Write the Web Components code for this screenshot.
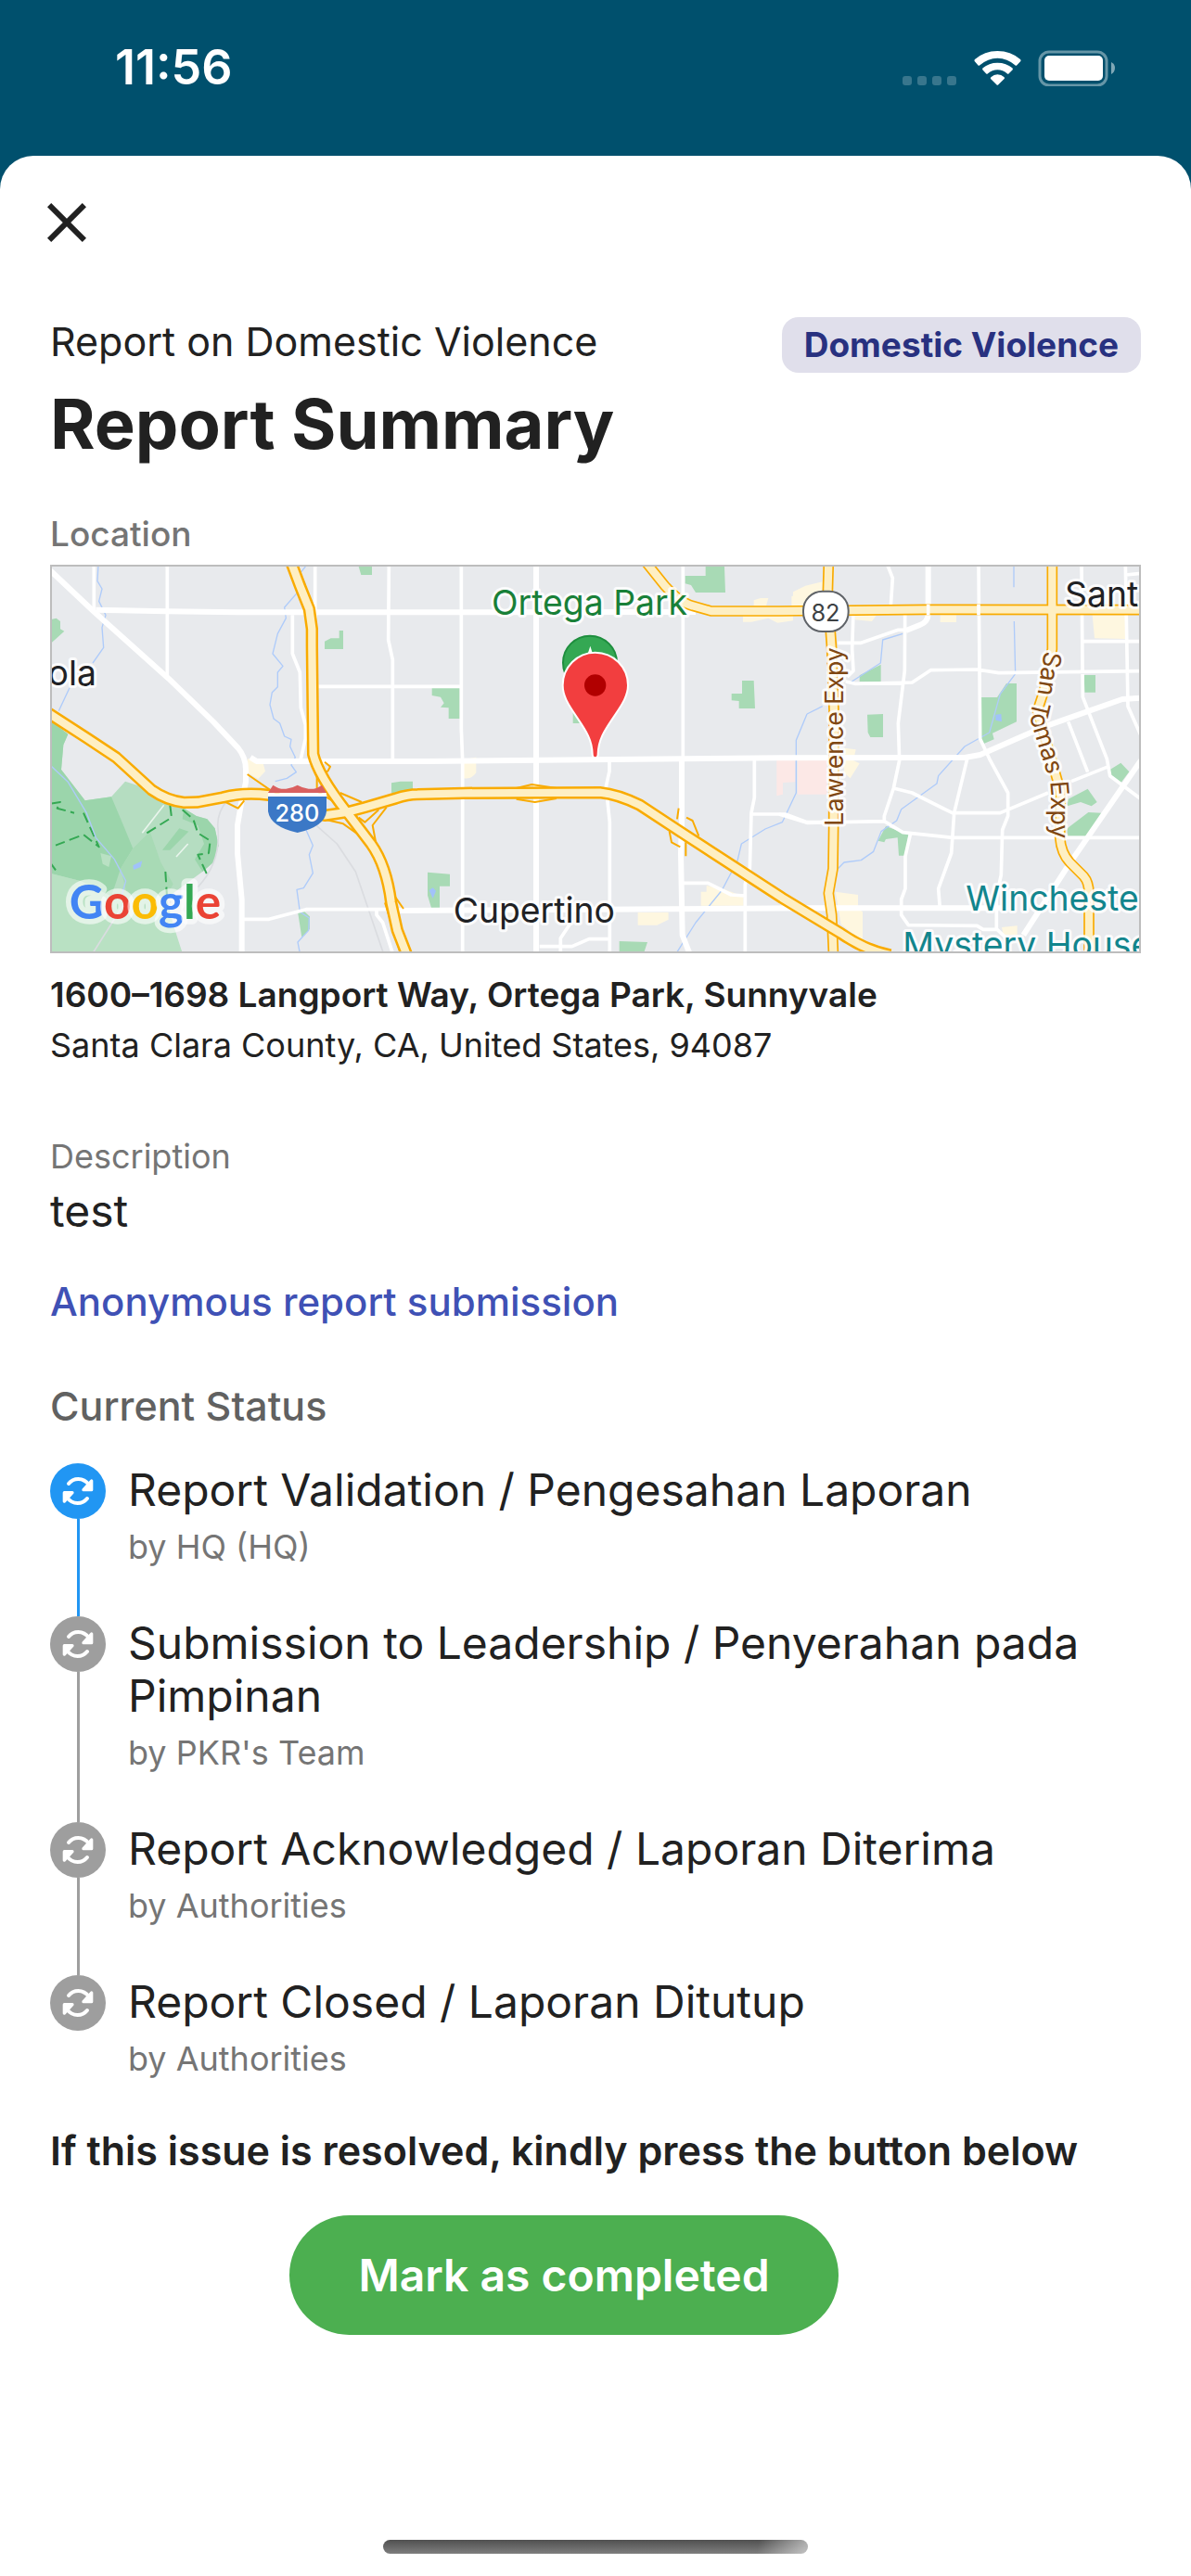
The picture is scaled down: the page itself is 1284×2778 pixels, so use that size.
<!DOCTYPE html>
<html lang="en">
<head>
<meta charset="utf-8">
<meta name="viewport" content="width=device-width, initial-scale=1">
<title>Report Summary</title>
<style>
  body {
    margin: 0;
    min-height: 100vh;
    display: flex;
    flex-direction: column;
    background: #00506d;
    color: #212121;
    font-family: Inter, "Liberation Sans", sans-serif;
  }
</style>
</head>
<body>
<status-bar time="11:56"></status-bar>
<report-sheet>
  <report-header>
    <span slot="subtitle">Report on Domestic Violence</span>
    <span slot="title">Report Summary</span>
    <tag-chip slot="tag">Domestic Violence</tag-chip>
  </report-header>
  <report-location>
    <span slot="street">1600–1698 Langport Way, Ortega Park, Sunnyvale</span>
    <span slot="region">Santa Clara County, CA, United States, 94087</span>
  </report-location>
  <report-description>test</report-description>
  <status-timeline>
    <timeline-step active by="HQ (HQ)">Report Validation / Pengesahan Laporan</timeline-step>
    <timeline-step by="PKR's Team">Submission to Leadership / Penyerahan pada Pimpinan</timeline-step>
    <timeline-step by="Authorities">Report Acknowledged / Laporan Diterima</timeline-step>
    <timeline-step by="Authorities" last>Report Closed / Laporan Ditutup</timeline-step>
  </status-timeline>
  <resolve-action>
    If this issue is resolved, kindly press the button below
    <span slot="action">Mark as completed</span>
  </resolve-action>
</report-sheet>

<script>
class StatusBar extends HTMLElement {
  constructor() {
    super();
    this._shadowRoot = this.attachShadow({ mode: 'open' });
  }

  connectedCallback() {
    this._shadowRoot.innerHTML = `
    <style>
    :host {
      display: flex;
      align-items: center;
      justify-content: space-between;
      box-sizing: border-box;
      height: 168px;
      padding: 0 82px 22px 124px;
      color: white;
    }

    time {
      font-size: 52px;
      font-weight: 600;
      line-height: 60px;
    }

    .icons {
      display: flex;
      align-items: center;
      gap: 18px;
    }

    svg {
      display: block;
    }
    </style>

    <time>${this.getAttribute('time')}</time>
    <div class="icons">
      <svg width="60" height="39" fill="#fff" fill-opacity=".22">
        <rect x="1" y="28" width="10" height="10" rx="3"/>
        <rect x="17" y="28" width="10" height="10" rx="3"/>
        <rect x="33" y="28" width="10" height="10" rx="3"/>
        <rect x="49" y="28" width="10" height="10" rx="3"/>
      </svg>
      <svg width="51" height="39" viewBox="0 0 153 117" fill="#fff">
        <path d="M2 36 Q0 33 3 30 Q34 3 76 3 Q119 3 150 30 Q153 33 151 36 L139 49 Q136 52 133 49 Q108 26 76 26 Q45 26 19 49 Q16 52 13 49 Z"/>
        <path d="M28 64 Q26 61 29 58 Q48 41 76 41 Q105 41 124 58 Q127 61 125 64 L113 76 Q110 79 107 76 Q94 64 76 64 Q59 64 45 76 Q42 79 39 76 Z"/>
        <path d="M54 93 Q52 90 56 87 Q64 79 76 79 Q89 79 97 87 Q101 90 98 93 L79 112 Q76 115 73 112 Z"/>
      </svg>
      <svg width="83" height="39" viewBox="0 0 83 39">
        <rect x="2" y="2" width="72" height="36" rx="10" fill="none" stroke="#fff" stroke-opacity=".4" stroke-width="3"/>
        <rect x="7" y="6" width="63" height="27" rx="5" fill="#fff"/>
        <path d="M79 13 Q83 15 83 19 Q83 24 79 26 Z" fill="#fff" fill-opacity=".5"/>
      </svg>
    </div>
    `;
  }
}

class ReportSheet extends HTMLElement {
  constructor() {
    super();
    this._shadowRoot = this.attachShadow({ mode: 'open' });
  }

  connectedCallback() {
    this._shadowRoot.innerHTML = `
    <style>
    :host {
      flex: 1;
      display: flex;
      flex-direction: column;
      box-sizing: border-box;
      padding: 36px 54px 24px;
      border-radius: 36px 36px 0 0;
      background: white;
    }

    .close {
      align-self: flex-start;
      margin: 0 0 66px -18px;
      padding: 0;
      border: none;
      background: none;
      color: inherit;
      cursor: pointer;
    }

    .close svg {
      display: block;
    }

    main {
      flex: 1;
    }

    .home {
      align-self: center;
      width: 458px;
      height: 15px;
      border-radius: 8px;
      background:
        linear-gradient(100deg, transparent 88%, rgba(255, 255, 255, .5) 99%),
        linear-gradient(#505050, #7e7e7e);
    }
    </style>

    <button class="close" type="button" aria-label="Close">
      <svg width="72" height="72" viewBox="0 0 24 24" fill="currentColor">
        <path d="M19 6.41 17.59 5 12 10.59 6.41 5 5 6.41 10.59 12 5 17.59 6.41 19 12 13.41 17.59 19 19 17.59 13.41 12z"/>
      </svg>
    </button>
    <main><slot></slot></main>
    <div class="home"></div>
    `;
  }
}

class ReportHeader extends HTMLElement {
  constructor() {
    super();
    this._shadowRoot = this.attachShadow({ mode: 'open' });
  }

  connectedCallback() {
    this._shadowRoot.innerHTML = `
    <style>
    :host {
      display: flex;
      align-items: flex-start;
      justify-content: space-between;
      gap: 24px;
      margin-bottom: 56px;
    }

    p {
      margin: 0 0 21px;
      font-size: 43px;
      line-height: 52px;
    }

    h1 {
      margin: 0;
      font-size: 74px;
      font-weight: 700;
      line-height: 84px;
    }
    </style>

    <div>
      <p><slot name="subtitle"></slot></p>
      <h1><slot name="title"></slot></h1>
    </div>
    <slot name="tag"></slot>
    `;
  }
}

class TagChip extends HTMLElement {
  constructor() {
    super();
    this._shadowRoot = this.attachShadow({ mode: 'open' });
  }

  connectedCallback() {
    this._shadowRoot.innerHTML = `
    <style>
    :host {
      display: block;
      padding: 12px 24px;
      border-radius: 18px;
      background: #e0dfeb;
      color: #283180;
      font-size: 37px;
      font-weight: 700;
      line-height: 36px;
      white-space: nowrap;
    }
    </style>

    <slot></slot>
    `;
  }
}

class ReportLocation extends HTMLElement {
  constructor() {
    super();
    this._shadowRoot = this.attachShadow({ mode: 'open' });
  }

  connectedCallback() {
    this._shadowRoot.innerHTML = `
    <style>
    :host {
      display: block;
      margin-bottom: 78px;
      font-size: 36px;
      line-height: 42px;
    }

    h2, p {
      margin: 0;
      font-weight: 400;
    }

    h2 {
      margin-bottom: 12px;
      color: #757575;
      font-size: 37px;
      font-weight: 500;
    }

    .street {
      margin: 24px 0 12px;
      font-size: 37px;
      font-weight: 600;
    }
    </style>

    <h2>Location</h2>
    <map-preview></map-preview>
    <p class="street"><slot name="street"></slot></p>
    <p><slot name="region"></slot></p>
    `;
  }
}

class MapPreview extends HTMLElement {
  constructor() {
    super();
    this._shadowRoot = this.attachShadow({ mode: 'open' });
  }

  connectedCallback() {
    this._shadowRoot.innerHTML = `
    <style>
    :host {
      display: block;
      outline: 2px solid #bdbdbd;
      outline-offset: -2px;
    }

    svg {
      display: block;
      width: 100%;
      height: auto;
      background: #e8eaed;
    }

    path {
      stroke-linejoin: round;
    }

    .road, .water, .trail, .rail { fill: none; }
    .road { stroke: #fff; stroke-width: 11; }
    .wide { stroke-width: 18; }
    .water { stroke: #aecbfa; stroke-width: 4; }
    .trail { stroke: #34a853; stroke-width: 6; stroke-dasharray: 34 16; }
    .rail { stroke: #dadce0; stroke-width: 5; }
    .park { fill: #a8dab5; }
    .shop { fill: #fef7e0; }
    .care { fill: #fce8e6; }
    .casing { fill: none; stroke: #f9ab00; stroke-width: 40; }
    .fill { fill: none; stroke: #feefc3; stroke-width: 25; }
    .casing.expy { stroke-width: 35; }
    .ramp { fill: none; stroke: #f9ab00; stroke-width: 6; }

    text {
      font-size: 112px;
      fill: #202124;
      stroke: #fff;
      stroke-opacity: .85;
      stroke-width: 18;
      stroke-linejoin: round;
      paint-order: stroke;
    }

    .expy-name { font-size: 80px; fill: #7f4712; }
    .green { fill: #188038; }
    .teal { fill: #12858d; }
    .shield { font-size: 76px; fill: #fff; stroke: none; font-weight: 500; }
    .logo {
      font-family: Lato, sans-serif;
      font-size: 154px;
      font-weight: 700;
      stroke-width: 34;
      stroke-opacity: .6;
    }
    </style>

    <svg viewBox="42 27 3528 1257" role="img" aria-label="Map of Ortega Park, Sunnyvale">
      <!-- open space reserve -->
      <path class="park" fill-opacity=".8" d="M42 530 L100 575 L85 610 L78 690 L155 790 L240 778 L285 728 L370 755 L475 815 L515 840 L550 850 L575 880 L587 935 L570 990 L535 1020 L440 1090 L418 1100 L430 1190 L470 1284 H42 Z"/>
      <path fill="#9bd5ab" d="M42 530 L100 575 L85 610 L78 690 L155 790 L240 778 L275 860 L310 945 L270 1010 L240 1100 L140 1050 L42 1025 Z"/>
      <path fill="#a8dab5" d="M310 945 L365 890 L400 990 L440 1060 L418 1100 L290 1090 L270 1010 Z"/>
      <path fill="#9bd5ab" d="M475 815 L515 840 L550 850 L575 880 L587 935 L570 990 L535 1020 L510 980 L540 930 L520 870 L470 850 Z M405 950 L460 880 L490 890 L430 950 Z"/>
      <path fill="#b9e1c3" d="M42 1025 L140 1050 L240 1100 L418 1100 L440 1190 L470 1284 H42 Z M205 960 L240 970 L232 1005 L212 995 Z"/>
      <path class="trail" d="M42 800 L75 795 L65 815 L120 830 M150 830 L200 940 L150 900 L60 935 M355 895 L435 845 L430 805 M470 820 L505 850 L520 895 L560 920 L555 960 L520 965 L550 1030 M415 1020 L420 1100 M42 990 L60 1015"/>
      <path fill="#a1c2fa" d="M310 1000 L340 985 L335 1005 L312 1014 Z"/>
      <path class="rail" d="M615 790 Q580 830 585 880 Q595 990 520 1070 M180 1284 L290 1110 M880 850 L970 930 L1030 1020 L1120 1284"/>
      <path class="road" d="M340 895 L410 805 M450 972 L488 930" style="stroke-width:5;stroke-opacity:.7"/>

      <!-- parks, shops, hospital -->
      <path class="park" d="M42 205 L62 200 L75 210 V235 L88 242 L48 278 H42 Z M1040 33 H1083 V60 H1048 Z M977 240 H990 V300 H930 V275 L950 265 H977 Z M1146 733 L1175 728 H1215 V765 H1146 Z M843 1150 H865 L882 1165 V1205 L856 1232 Z"/>
      <path class="shop" d="M680 655 L728 658 L738 695 L715 720 L680 700 Z"/>
      <g transform="translate(1230)">
        <path class="park" d="M932 33 H993 L996 117 H900 L885 93 L866 88 V63 H932 Z M47 426 H137 V525 H101 V490 L75 488 L86 475 L75 455 L47 450 Z M1050 402 H1088 L1092 492 H1040 V468 L1016 466 V444 H1050 Z M503 500 H540 V540 H503 Z M33 1022 L105 1028 V1067 H72 V1137 H45 L33 1097 Z M653 1245 L744 1248 L732 1284 H653 Z"/>
        <path class="shop" d="M150 658 L190 650 V700 Q175 722 150 718 Z M917 1085 H935 V1065 L1000 1080 L1055 1100 V1130 H917 Z M713 1152 H812 V1175 L775 1193 H713 Z M1088 160 V142 L1110 135 H1135 L1128 160 Z M1210 160 V130 L1250 112 L1300 110 V160 Z M1053 192 H1215 V208 L1165 215 L1135 200 L1080 212 H1053 Z"/>
        <path class="care" d="M1162 660 H1222 V730 L1182 732 V770 L1162 775 Z M1230 660 H1325 V770 H1230 Z"/>
        <path fill="#a1c2fa" d="M38 1080 L50 1072 L60 1082 L50 1107 Z"/>
      </g>
      <g transform="translate(2400)">
        <path class="park" d="M260 385 L329 350 V405 H260 Z M285 512 L336 510 V585 H295 L287 570 Z M651 456 H705 L735 411 H768 V535 L690 572 L695 592 L662 606 L651 590 Z M986 384 H1023 V440 H988 Z M1070 690 L1105 668 L1132 697 L1105 733 L1070 705 Z M935 785 L998 752 L1028 795 L1010 808 L975 795 L932 808 Z M932 880 L1000 828 L1042 830 L995 905 H932 Z M320 920 L345 873 L418 900 L408 968 H387 L383 910 L345 915 L340 925 Z"/>
        <path class="shop" d="M45 160 V115 L85 95 L140 82 V160 Z M245 190 H315 L300 210 L245 205 Z M521 190 H573 V213 H521 Z M1013 190 H1120 V267 L1020 265 Z M210 620 L248 625 L240 660 L260 670 L230 718 L210 700 Z M182 1085 L255 1095 V1140 L270 1150 V1245 L200 1190 Z M720 1200 L770 1195 V1225 H725 Z"/>
        <path fill="#a1c2fa" d="M700 512 L718 510 L720 535 L700 530 Z"/>
      </g>

      <!-- creeks -->
      <path class="water" d="M198 27 L195 80 L210 105 L200 145 L222 190 L210 230 L215 295 L180 345 M105 425 L70 500 M42 675 L100 730 L160 830 L190 910 L250 980 L287 1050 L270 1110 M868 33 L850 55 L868 90 L835 125 L800 165 L805 200 L778 250 L762 315 L795 355 L778 375 V422 L760 440 L753 480 L765 525 L785 540 L800 582 L822 592 L818 615 L835 650 L822 675 L838 698 L808 718 L770 728 M870 885 L892 935 L880 965 L892 1025 L862 1073 L840 1078 L850 1150 L880 1170 L878 1210 L843 1248 L850 1284"/>
      <path class="water" d="M2490 510 L2455 595 V765 L2410 860 L2355 882 L2278 930 L2265 985 L2215 1080 L2130 1185 L2070 1280"/>
      <path class="water" d="M2800 250 L2735 270 L2728 345 L2630 408 M2540 485 L2490 510 M3159 33 V100 M3160 210 L3164 380 L3115 445 L3080 570 L3000 615 L2915 710 L2910 735 L2795 818 L2780 855 L2730 890 L2705 955 L2665 983 L2610 990 L2590 1010"/>

      <!-- streets -->
      <path class="road wide" d="M42 45 L185 180 L425 395 L570 535 L650 620 Q675 650 675 690 V730 L660 800 L648 870 V960 L662 1110 V1284"/>
      <path class="road wide" d="M190 173 L420 178 L650 181 H1000 L2130 180"/>
      <path class="road wide" d="M690 650 L710 663 H1260 L2090 655 L2400 652 L3000 651 L3050 642 L3260 550 L3510 462 L3570 458"/>
      <path class="road wide" d="M1170 1146 L1700 1143 L2490 1138 H3120"/>
      <path class="road" d="M184 27 V175 M421 27 V385 M899 27 V200 M826 190 V315 L850 375 L853 490 L868 545 V590 L853 655 M1138 27 L1136 270 L1150 335 V660 M910 421 H1370 M662 1174 H750 L870 1142 H1130 M1098 1146 V1160 L1118 1185 L1150 1284"/>
      <g transform="translate(1230)">
        <path class="road" d="M142 27 V560 L146 660 V1284 M859 27 V660 M621 660 V695 L610 745 L622 860 V1284 M395 1262 H500 L555 1238 H622 M463 1284 V1235 L500 1180 M1090 660 V780 L1080 830 L1075 1010 L1060 1060 V1284 M1075 834 H1190 L1260 860 H1340 M860 1057 H940 L1015 1095 L1060 1098"/>
        <path class="road wide" d="M384 27 V1284 M855 655 V860 L852 960 L857 1225 L880 1284"/>
      </g>
      <g transform="translate(2400)">
        <path class="road" d="M350 27 L367 70 L361 160 M407 180 L406 370 L385 540 L389 660 L370 750 L340 840 V862 M240 180 L236 300 L240 370 L220 390 M190 280 H265 L385 238 H410 M215 405 L245 412 L430 408 L490 368 L640 366 L710 377 L1170 371 M0 834 L90 862 L340 857 L400 893 L560 910 H1170 M370 750 L430 765 L560 830 H715 L870 765 M608 655 L566 830 L557 960 L515 1075 L520 1138 M645 27 L650 590 L680 655 L740 765 V840 L722 885 L718 1030 L703 1100 V1205 M424 900 L408 970 V1075 L395 1110 V1160 L418 1193 L640 1195 L660 1207 H705 L740 1240 M978 27 L982 455 L1060 655 L1070 710 L1170 785 M1120 27 L1128 485 L1170 580 M985 275 H1170 M1120 60 L1170 55 M935 535 L998 698 M945 728 L1065 680"/>
        <path class="road wide" d="M482 27 V185 Q482 212 455 222 L410 240 M790 1225 L935 1000 L1170 660"/>
      </g>

      <!-- freeways and expressways -->
      <path class="ramp" d="M680 705 L760 760 M610 795 L650 815 L670 790 M905 700 V760 L970 800 M980 765 L1050 795 M925 850 L990 865 L1060 915 M1130 812 L1085 870 L1100 950 M1125 1120 L1150 1200 L1175 1284 M1150 1090 L1185 1140 M1550 750 L1600 738 L1680 750 M1550 785 L1610 795 L1680 783 M930 665 L948 680 L940 695 L925 700 M1040 845 L1060 860 L1105 820"/>
      <path class="ramp" d="M2075 815 L2070 850 M2100 845 L2120 855 L2140 905 M2045 890 L2052 925 L2080 940 M2098 925 V970"/>
      <path class="casing expy" d="M1970 20 L2030 95 Q2080 150 2120 160 L2180 177 H2400 L2880 172 L3580 173"/>
      <path class="casing expy" d="M2560 20 L2557 120 L2570 300 L2577 500 L2576 870 L2574 1010 L2560 1090 L2570 1160 L2576 1300 M3283 20 V300 L3255 440 L3235 500 L3310 760 L3308 910 Q3312 960 3340 990 L3385 1035 Q3402 1055 3402 1090 V1300"/>
      <path class="fill" d="M2560 20 L2557 120 L2570 300 L2577 500 L2576 870 L2574 1010 L2560 1090 L2570 1160 L2576 1300 M3283 20 V300 L3255 440 L3235 500 L3310 760 L3308 910 Q3312 960 3340 990 L3385 1035 Q3402 1055 3402 1090 V1300"/>
      <path class="fill" d="M1970 20 L2030 95 Q2080 150 2120 160 L2180 177 H2400 L2880 172 L3580 173"/>
      <path class="casing" d="M30 503 L160 587 L255 650 L370 755 Q420 790 475 796 L520 795 L600 780 Q665 762 750 772 L850 820 L930 838 L1000 828 L1060 812 L1160 783 Q1200 770 1230 770 L1380 766 L1820 764 Q1880 770 1950 805 L2090 897 L2410 1105 L2600 1220 Q2680 1275 2760 1290"/>
      <path class="casing" d="M820 15 L850 95 L880 170 L889 235 V290 L893 640 Q910 710 1000 825 L1080 930 Q1130 1000 1145 1120 L1165 1210 L1200 1300"/>
      <path class="fill" d="M30 503 L160 587 L255 650 L370 755 Q420 790 475 796 L520 795 L600 780 Q665 762 750 772 L850 820 L930 838 L1000 828 L1060 812 L1160 783 Q1200 770 1230 770 L1380 766 L1820 764 Q1880 770 1950 805 L2090 897 L2410 1105 L2600 1220 Q2680 1275 2760 1290"/>
      <path class="fill" d="M820 15 L850 95 L880 170 L889 235 V290 L893 640 Q910 710 1000 825 L1080 930 Q1130 1000 1145 1120 L1165 1210 L1200 1300"/>
      <path class="road" d="M2882 155 V190 M3045 155 V190"/>

      <!-- route shields -->
      <path d="M747 765 L763 740 Q785 755 805 752 Q825 750 842 740 Q860 750 878 752 Q900 755 921 740 L936 765 Z" fill="#d96060"/>
      <path d="M747 777 H936 V825 Q930 875 842 894 Q755 875 747 825 Z" fill="#3b78c6"/>
      <path d="M747 766 H936 V777 H747 Z" fill="#fff"/>
      <text class="shield" x="841" y="857" text-anchor="middle">280</text>
      <rect x="2478" y="113" width="146" height="130" rx="62" fill="#fff" stroke="#5f6368" stroke-width="6"/>
      <text class="shield" x="2550" y="209" text-anchor="middle" style="fill:#3c4043;font-weight:400">82</text>

      <!-- place names -->
      <text x="192" y="417" text-anchor="end">ola</text>
      <text x="1346" y="1184">Cupertino</text>
      <text class="green" x="1470" y="188">Ortega Park</text>
      <text x="3324" y="161">Sant</text>
      <text class="teal" x="3004" y="1146">Wincheste</text>
      <text class="teal" x="2800" y="1296">Mystery House</text>
      <text class="expy-name" transform="translate(2608 872) rotate(-90)">Lawrence Expy</text>
      <path id="tomas" fill="none" d="M3258 305 L3236 445 Q3208 490 3216 540 L3266 700 Q3279 740 3279 760 V960"/>
      <text class="expy-name"><textPath href="#tomas">San Tomas Expy</textPath></text>
      <text class="logo" x="104" y="1174"><tspan fill="#4285f4">G</tspan><tspan fill="#ea4335">o</tspan><tspan fill="#fbbc04">o</tspan><tspan fill="#4285f4">g</tspan><tspan fill="#34a853">l</tspan><tspan fill="#ea4335">e</tspan></text>

      <!-- park badge and marker -->
      <circle cx="1788" cy="344" r="87" fill="#34a853" stroke="#1e8e3e" stroke-width="6"/>
      <path d="M1789 290 L1800 325 H1778 Z" fill="#fff"/>
      <path d="M1805 311 C1864 311 1911 358 1911 417 C1911 450 1893 478 1868 515 C1838 560 1815 590 1814 640 Q1814 652 1805 652 Q1796 652 1796 640 C1795 590 1772 560 1742 515 C1717 478 1700 450 1700 417 C1700 358 1747 311 1805 311 Z" fill="#f23e3f" stroke="#fff" stroke-width="6"/>
      <circle cx="1805" cy="417" r="35" fill="#b10000"/>
    </svg>
    `;
  }
}

class ReportDescription extends HTMLElement {
  constructor() {
    super();
    this._shadowRoot = this.attachShadow({ mode: 'open' });
  }

  connectedCallback() {
    this._shadowRoot.innerHTML = `
    <style>
    :host {
      display: block;
      margin-bottom: 60px;
    }

    h2, p {
      margin: 0;
    }

    h2 {
      margin-bottom: 12px;
      color: #757575;
      font-size: 36px;
      font-weight: 400;
      line-height: 42px;
    }

    p {
      margin-bottom: 46px;
      font-size: 48px;
      line-height: 52px;
    }

    .anonymous {
      margin: 0;
      color: #3f51b5;
      font-size: 42px;
      font-weight: 500;
    }
    </style>

    <h2>Description</h2>
    <p><slot></slot></p>
    <p class="anonymous">Anonymous report submission</p>
    `;
  }
}

class StatusTimeline extends HTMLElement {
  constructor() {
    super();
    this._shadowRoot = this.attachShadow({ mode: 'open' });
  }

  connectedCallback() {
    this._shadowRoot.innerHTML = `
    <style>
    :host {
      display: block;
      margin-bottom: 52px;
    }

    h2 {
      margin: 0 0 36px;
      color: #616161;
      font-size: 43px;
      font-weight: 500;
      line-height: 52px;
    }
    </style>

    <h2>Current Status</h2>
    <slot></slot>
    `;
  }
}

class TimelineStep extends HTMLElement {
  constructor() {
    super();
    this._shadowRoot = this.attachShadow({ mode: 'open' });
  }

  connectedCallback() {
    this._shadowRoot.innerHTML = `
    <style>
    :host {
      display: flex;
      gap: 24px;
      --step-color: #9e9e9e;
    }

    :host([active]) {
      --step-color: #2196f3;
    }

    .rail {
      flex: none;
      display: flex;
      flex-direction: column;
      align-items: center;
      width: 60px;
    }

    .dot {
      display: block;
      width: 60px;
      height: 60px;
      border-radius: 50%;
      background: var(--step-color);
    }

    .line {
      flex: 1;
      width: 3px;
      background: var(--step-color);
    }

    :host([last]) .line {
      display: none;
    }

    .text {
      padding-bottom: 54px;
    }

    :host([last]) .text {
      padding-bottom: 0;
    }

    h3, p {
      margin: 0;
      font-weight: 400;
    }

    h3 {
      margin-bottom: 12px;
      font-size: 48px;
      line-height: 57px;
    }

    p {
      color: #757575;
      font-size: 36px;
      line-height: 42px;
    }
    </style>

    <div class="rail">
      <svg class="dot" viewBox="0 0 180 180" fill="none" stroke="#fff" stroke-width="12" stroke-linecap="round" stroke-linejoin="round">
        <path d="M60 66 Q72 51 91 51 Q112 51 126 70"/>
        <path d="M134 57 V86 H108 Z" fill="#fff" stroke-width="10"/>
        <path d="M120 114 Q108 129 89 129 Q68 129 54 110"/>
        <path d="M46 123 V95 H72 Z" fill="#fff" stroke-width="10"/>
      </svg>
      <div class="line"></div>
    </div>
    <div class="text">
      <h3><slot></slot></h3>
      <p>by ${this.getAttribute('by')}</p>
    </div>
    `;
  }
}

class ResolveAction extends HTMLElement {
  constructor() {
    super();
    this._shadowRoot = this.attachShadow({ mode: 'open' });
  }

  connectedCallback() {
    this._shadowRoot.innerHTML = `
    <style>
    :host {
      display: flex;
      flex-direction: column;
      align-items: center;
      gap: 44px;
      width: fit-content;
    }

    p {
      margin: 0;
      font-size: 43px;
      font-weight: 600;
      line-height: 52px;
    }

    button {
      padding: 36px 74px;
      border: none;
      border-radius: 65px;
      background: #4caf50;
      color: white;
      font-family: inherit;
      font-size: 48px;
      font-weight: 600;
      line-height: 57px;
      cursor: pointer;
    }
    </style>

    <p><slot></slot></p>
    <button type="button"><slot name="action"></slot></button>
    `;
  }
}

customElements.define('status-bar', StatusBar);
customElements.define('report-sheet', ReportSheet);
customElements.define('report-header', ReportHeader);
customElements.define('tag-chip', TagChip);
customElements.define('report-location', ReportLocation);
customElements.define('map-preview', MapPreview);
customElements.define('report-description', ReportDescription);
customElements.define('status-timeline', StatusTimeline);
customElements.define('timeline-step', TimelineStep);
customElements.define('resolve-action', ResolveAction);
</script>
</body>
</html>
